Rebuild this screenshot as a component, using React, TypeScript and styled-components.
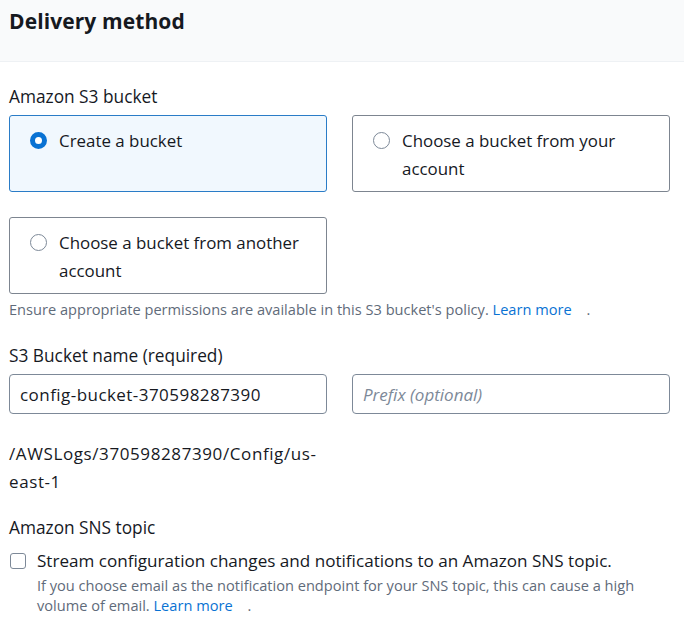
import React from "react";
import styled, { createGlobalStyle } from "styled-components";

const Global = createGlobalStyle`
  html, body { margin: 0; padding: 0; background: #ffffff; }
  body {
    font-family: "Open Sans", "Liberation Sans", Arial, sans-serif;
    color: #16191f;
    width: 684px;
    overflow: hidden;
  }
`;

const Page = styled.div`
  width: 684px;
  height: 620px;
  overflow: hidden;
`;

const Header = styled.header`
  height: 62px;
  background: #f9fafb;
  border-bottom: 1px solid #eef1f4;
  box-sizing: border-box;
  padding: 7px 9px 0;
`;

const Title = styled.h2`
  margin: 0;
  font-size: 21px;
  font-weight: 700;
  line-height: 28px;
  letter-spacing: 0.1px;
  color: #16191f;
`;

const Body = styled.div`
  padding: 22px 9px 0 9px;
  display: flex;
  flex-direction: column;
`;

const Label = styled.div<{ $mt?: number }>`
  font-size: 17.3px;
  line-height: 24px;
  margin-top: ${(p) => p.$mt ?? 0}px;
  color: #16191f;
`;

const CardGrid = styled.div`
  display: grid;
  grid-template-columns: 318px 318px;
  column-gap: 25px;
  row-gap: 25px;
  margin-top: 6px;
`;

const Card = styled.label<{ $selected?: boolean }>`
  box-sizing: border-box;
  height: 77px;
  border: 1px solid ${(p) => (p.$selected ? "#2a7cc7" : "#7d8590")};
  background: ${(p) => (p.$selected ? "#f1f8fe" : "#ffffff")};
  border-radius: 3px;
  padding: 11px 22px 8px 20px;
  display: flex;
  align-items: flex-start;
  gap: 12px;
`;

const Radio = styled.span<{ $checked?: boolean }>`
  flex: none;
  box-sizing: border-box;
  width: 17px;
  height: 17px;
  margin-top: 5px;
  border-radius: 50%;
  border: ${(p) => (p.$checked ? "5px solid #0972d3" : "1.5px solid #7d8998")};
  background: #ffffff;
`;

const CardText = styled.span`
  font-size: 16.9px;
  line-height: 28px;
  color: #16191f;
`;

const Help = styled.div<{ $mt?: number }>`
  font-size: 14.6px;
  line-height: 20px;
  color: #5f6b7a;
  margin-top: ${(p) => p.$mt ?? 0}px;
`;

const Link = styled.a`
  color: #0972d3;
  text-decoration: none;
  margin-right: 15px;
`;

const InputRow = styled.div`
  display: grid;
  grid-template-columns: 318px 318px;
  column-gap: 25px;
  margin-top: 6px;
`;

const Input = styled.div<{ $placeholder?: boolean }>`
  box-sizing: border-box;
  height: 40px;
  border: 1px solid #7d8998;
  border-radius: 4px;
  padding: 0 10px;
  display: flex;
  align-items: center;
  font-size: 17px;
  letter-spacing: ${(p) => (p.$placeholder ? "0" : "0.45px")};
  color: ${(p) => (p.$placeholder ? "#7d8998" : "#16191f")};
  font-style: ${(p) => (p.$placeholder ? "italic" : "normal")};
`;

const Path = styled.div`
  width: 318px;
  font-size: 17px;
  letter-spacing: 0.6px;
  line-height: 28px;
  margin-top: 26px;
`;

const CheckRow = styled.div`
  display: flex;
  align-items: flex-start;
  gap: 11px;
  margin-top: 9px;
  margin-left: 1px;
`;

const Checkbox = styled.span`
  flex: none;
  box-sizing: border-box;
  width: 16px;
  height: 16px;
  margin-top: 4px;
  border: 1.5px solid #7d8998;
  border-radius: 3px;
  background: #fff;
`;

const CheckContent = styled.div`
  display: flex;
  flex-direction: column;
  padding-right: 20px;
`;

const CheckText = styled.div`
  font-size: 17.1px;
  line-height: 24px;
  margin-bottom: 2px;
`;

export default function App() {
  return (
    <Page>
      <Global />
      <Header>
        <Title>Delivery method</Title>
      </Header>
      <Body>
        <Label $mt={1}>Amazon S3 bucket</Label>
        <CardGrid>
          <Card $selected>
            <Radio $checked />
            <CardText>Create a bucket</CardText>
          </Card>
          <Card>
            <Radio />
            <CardText>Choose a bucket from your account</CardText>
          </Card>
          <Card>
            <Radio />
            <CardText>Choose a bucket from another account</CardText>
          </Card>
        </CardGrid>
        <Help $mt={5}>
          Ensure appropriate permissions are available in this S3 bucket's policy.{" "}
          <Link href="#">Learn more</Link>.
        </Help>
        <Label $mt={25}>S3 Bucket name (required)</Label>
        <InputRow>
          <Input>config-bucket-370598287390</Input>
          <Input $placeholder>Prefix (optional)</Input>
        </InputRow>
        <Path>/AWSLogs/370598287390/Config/us-east-1</Path>
        <Label $mt={20}>Amazon SNS topic</Label>
        <CheckRow>
          <Checkbox />
          <CheckContent>
            <CheckText>Stream configuration changes and notifications to an Amazon SNS topic.</CheckText>
            <Help>
              If you choose email as the notification endpoint for your SNS topic, this can cause a high volume of
              email. <Link href="#">Learn more</Link>.
            </Help>
          </CheckContent>
        </CheckRow>
      </Body>
    </Page>
  );
}
